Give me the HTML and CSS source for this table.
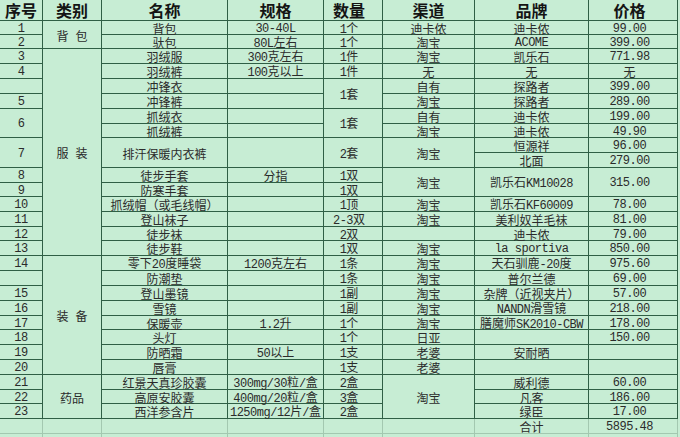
FILE: index.html
```html
<!DOCTYPE html>
<html lang="zh-CN">
<head>
<meta charset="utf-8">
<title>装备清单</title>
<link rel="stylesheet" href="styles.css">
</head>
<body>
<div class="sheet">
<div class="h">序号</div><div class="h">类别</div><div class="h">名称</div><div class="h">规格</div><div class="h q">数量</div><div class="h">渠道</div><div class="h">品牌</div><div class="h p">价格</div>

<div class="m">1</div><div class="cat r2"><span>背</span><span>包</span></div><div>背包</div><div class="m">30-40L</div><div class="q"><span><span class="m">1</span>个</span></div><div>迪卡侬</div><div>迪卡侬</div><div class="m p">99.00</div>

<div class="m">2</div><div>驮包</div><div><span><span class="m">80L</span>左右</span></div><div class="q"><span><span class="m">1</span>个</span></div><div>淘宝</div><div class="m">ACOME</div><div class="m p">399.00</div>

<div class="m">3</div><div class="cat r14"><span>服</span><span>装</span></div><div>羽绒服</div><div><span><span class="m">300</span>克左右</span></div><div class="q"><span><span class="m">1</span>件</span></div><div>淘宝</div><div>凯乐石</div><div class="m p">771.98</div>

<div class="m">4</div><div>羽绒裤</div><div><span><span class="m">100</span>克以上</span></div><div class="q"><span><span class="m">1</span>件</span></div><div>无</div><div>无</div><div class="p">无</div>

<div></div><div>冲锋衣</div><div></div><div class="q r2"><span><span class="m">1</span>套</span></div><div>自有</div><div>探路者</div><div class="m p">399.00</div>

<div class="m">5</div><div>冲锋裤</div><div></div><div>淘宝</div><div>探路者</div><div class="m p">289.00</div>

<div class="m r2">6</div><div>抓绒衣</div><div></div><div class="q r2"><span><span class="m">1</span>套</span></div><div>自有</div><div>迪卡侬</div><div class="m p">199.00</div>

<div>抓绒裤</div><div></div><div>淘宝</div><div>迪卡侬</div><div class="m p">49.90</div>

<div class="m r2">7</div><div class="r2">排汗保暖内衣裤</div><div class="r2"></div><div class="q r2"><span><span class="m">2</span>套</span></div><div class="r2">淘宝</div><div>恒源祥</div><div class="m p">96.00</div>

<div>北面</div><div class="m p">279.00</div>

<div class="m">8</div><div>徒步手套</div><div>分指</div><div class="q"><span><span class="m">1</span>双</span></div><div class="r2">淘宝</div><div class="r2"><span>凯乐石<span class="m">KM10028</span></span></div><div class="m p r2">315.00</div>

<div class="m">9</div><div>防寒手套</div><div></div><div class="q"><span><span class="m">1</span>双</span></div>

<div class="m">10</div><div>抓绒帽（或毛线帽）</div><div></div><div class="q"><span><span class="m">1</span>顶</span></div><div>淘宝</div><div><span>凯乐石<span class="m">KF60009</span></span></div><div class="m p">78.00</div>

<div class="m">11</div><div>登山袜子</div><div></div><div class="q"><span><span class="m">2-3</span>双</span></div><div>淘宝</div><div>美利奴羊毛袜</div><div class="m p">81.00</div>

<div class="m">12</div><div>徒步袜</div><div></div><div class="q"><span><span class="m">2</span>双</span></div><div></div><div>迪卡侬</div><div class="m p">79.00</div>

<div class="m">13</div><div>徒步鞋</div><div></div><div class="q"><span><span class="m">1</span>双</span></div><div>淘宝</div><div class="m">la sportiva</div><div class="m p">850.00</div>

<div class="m">14</div><div class="cat r8"><span>装</span><span>备</span></div><div><span>零下<span class="m">20</span>度睡袋</span></div><div><span><span class="m">1200</span>克左右</span></div><div class="q"><span><span class="m">1</span>条</span></div><div>淘宝</div><div><span>天石驯鹿<span class="m">-20</span>度</span></div><div class="m p">975.60</div>

<div></div><div>防潮垫</div><div></div><div class="q"><span><span class="m">1</span>条</span></div><div>淘宝</div><div>普尔兰德</div><div class="m p">69.00</div>

<div class="m">15</div><div>登山墨镜</div><div></div><div class="q"><span><span class="m">1</span>副</span></div><div>淘宝</div><div>杂牌（近视夹片）</div><div class="m p">57.00</div>

<div class="m">16</div><div>雪镜</div><div></div><div class="q"><span><span class="m">1</span>副</span></div><div>淘宝</div><div><span><span class="m">NANDN</span>滑雪镜</span></div><div class="m p">218.00</div>

<div class="m">17</div><div>保暖壶</div><div><span><span class="m">1.2</span>升</span></div><div class="q"><span><span class="m">1</span>个</span></div><div>淘宝</div><div><span>膳魔师<span class="m">SK2010-CBW</span></span></div><div class="m p">178.00</div>

<div class="m">18</div><div>头灯</div><div></div><div class="q"><span><span class="m">1</span>个</span></div><div>日亚</div><div></div><div class="m p">150.00</div>

<div class="m">19</div><div>防晒霜</div><div><span><span class="m">50</span>以上</span></div><div class="q"><span><span class="m">1</span>支</span></div><div>老婆</div><div>安耐晒</div><div class="p"></div>

<div class="m">20</div><div>唇膏</div><div></div><div class="q"><span><span class="m">1</span>支</span></div><div>老婆</div><div></div><div class="p"></div>

<div class="m">21</div><div class="r3">药品</div><div>红景天真珍胶囊</div><div><span><span class="m">300mg/30</span>粒<span class="m">/</span>盒</span></div><div class="q"><span><span class="m">2</span>盒</span></div><div class="r3">淘宝</div><div>威利德</div><div class="m p">60.00</div>

<div class="m">22</div><div>高原安胶囊</div><div><span><span class="m">400mg/20</span>粒<span class="m">/</span>盒</span></div><div class="q"><span><span class="m">3</span>盒</span></div><div>凡客</div><div class="m p">186.00</div>

<div class="m">23</div><div>西洋参含片</div><div><span><span class="m">1250mg/12</span>片<span class="m">/</span>盒</span></div><div class="q"><span><span class="m">2</span>盒</span></div><div>绿臣</div><div class="m p">17.00</div>

<div class="f"></div><div class="f"></div><div class="f"></div><div class="f"></div><div class="f"></div><div class="f"></div><div class="f">合计</div><div class="f m p">5895.48</div>

<div class="f"></div><div class="f"></div><div class="f"></div><div class="f"></div><div class="f"></div><div class="f"></div><div class="f"></div><div class="f"></div>
</div>
</body>
</html>
```

FILE: styles.css
```css
html, body {
  margin: 0;
  padding: 0;
}

body {
  width: 680px;
  height: 437px;
  overflow: hidden;
  background: #c7edd4;
  font-family: "Noto Sans CJK SC", sans-serif;
  font-size: 12px;
  color: #2b2b2b;
}

.sheet {
  display: grid;
  grid-template-columns: 43px 59px 126px 96px 59px 92px 114px 89px;
  grid-template-rows:
    21px
    14px 14px 15px 15px 15px 15px 15px 14px 15px 15px
    15px 14px 15px 15px 14px 15px 15px 15px 15px 15px
    14px 15px 15px 15px 15px 14px 15px 15px 15px;
}

.sheet > div {
  box-sizing: border-box;
  border-right: 1px solid #2f5f45;
  border-bottom: 1px solid #2f5f45;
  display: flex;
  align-items: center;
  justify-content: center;
  white-space: nowrap;
  line-height: 12px;
  padding-top: 2px;
  min-width: 0;
}

.sheet > .f {
  border-color: #a3c8b0;
}

.sheet > .h {
  font-size: 16px;
  font-weight: 700;
  line-height: 18px;
  padding-top: 0;
  color: #141414;
}

.m {
  font-family: "Liberation Mono", monospace;
  font-size: 12px;
  letter-spacing: -0.5px;
}

.q {
  padding-right: 8px;
}

.p {
  padding-right: 7px;
}

.cat {
  gap: 7px;
}

.r2 { grid-row: span 2; }
.r3 { grid-row: span 3; }
.r8 { grid-row: span 8; }
.r14 { grid-row: span 14; }
```
